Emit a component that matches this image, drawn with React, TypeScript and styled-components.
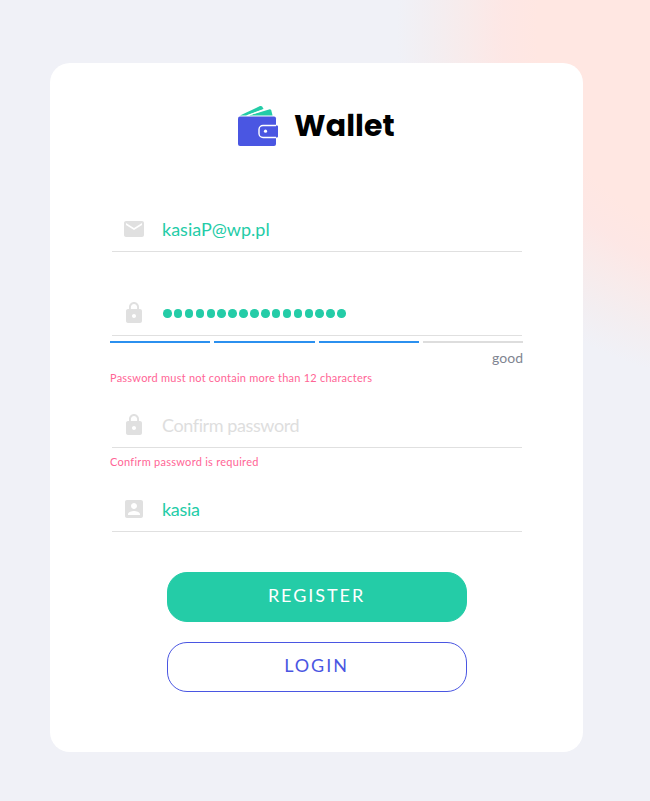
import React from 'react';
import styled, { createGlobalStyle } from 'styled-components';

const GlobalStyle = createGlobalStyle`
  * { box-sizing: border-box; }
  body { margin: 0; background: #f0f1f7; font-family: Lato, "Open Sans", sans-serif; }
`;

const Page = styled.main`
  height: 801px;
  padding: 63px 0 0 50px;
  overflow: hidden;
  background: radial-gradient(circle at 752px 30px,
    #ffe7e2 0, #ffe7e2 215px, #fde7e5 250px, #f8ebeb 285px, #f3eef1 320px, #f0f1f7 355px);
`;

const Card = styled.section`
  width: 533px;
  height: 689px;
  padding: 40px 60px 0;
  border-radius: 20px;
  background: #fff;
`;

const Brand = styled.header`
  display: flex;
  align-items: center;
  height: 46px;
  padding-left: 128px;
  gap: 16px;
`;

const BrandName = styled.h1`
  margin: 0;
  padding-bottom: 2px;
  font: 700 30px/45px Poppins, Inter, sans-serif;
  letter-spacing: 0.1px;
  color: #000;
`;

const Form = styled.form`
  display: flex;
  flex-direction: column;
  padding-top: 59px;
`;

const Field = styled.div<{ $height: number }>`
  height: ${(p) => p.$height}px;
`;

const InputRow = styled.label`
  display: flex;
  align-items: center;
  height: 44px;
  margin: 0 1px 0 2px;
  padding: 0 0 2px 10px;
  gap: 16px;
  border-bottom: 1px solid #e0e0e0;
`;

const Value = styled.span<{ $muted?: boolean; $spacing: number }>`
  padding-top: 2px;
  font-size: 18px;
  line-height: 27px;
  letter-spacing: ${(p) => p.$spacing}px;
  color: ${(p) => (p.$muted ? '#dedede' : '#24cca7')};
`;

const Dots = styled.span`
  display: flex;
  gap: 2.4px;
  padding: 2px 0 0 1px;
`;

const Dot = styled.i`
  width: 8.5px;
  height: 8.5px;
  border-radius: 50%;
  background: #24cca7;
`;

const Meter = styled.div`
  display: grid;
  grid-template-columns: repeat(4, 1fr);
  gap: 4px;
  padding-top: 5px;
`;

const Segment = styled.span<{ $on: boolean }>`
  height: 2px;
  background: ${(p) => (p.$on ? '#2b90ef' : '#ddd')};
`;

const Strength = styled.p`
  margin: 5px 0 1px;
  font-size: 14px;
  line-height: 20px;
  text-align: right;
  color: #808591;
`;

const ErrorText = styled.p<{ $top: number; $spacing: number }>`
  margin: ${(p) => p.$top}px 0 0;
  font-size: 11px;
  line-height: 18px;
  letter-spacing: ${(p) => p.$spacing}px;
  color: #ff6596;
`;

const Actions = styled.div`
  display: flex;
  flex-direction: column;
  align-items: center;
  gap: 20px;
  padding-left: 1px;
`;

const Button = styled.button<{ $primary?: boolean }>`
  width: 300px;
  height: 50px;
  padding: 0 1px 4px 0;
  border: 1px solid ${(p) => (p.$primary ? '#24cca7' : '#4a56e2')};
  border-radius: 20px;
  background: ${(p) => (p.$primary ? '#24cca7' : '#fff')};
  color: ${(p) => (p.$primary ? '#fff' : '#4a56e2')};
  font: 400 18px/27px Lato, sans-serif;
  letter-spacing: 1.95px;
`;

const Icon = styled.svg`
  display: block;
  flex: none;
  width: 24px;
  height: 24px;
  fill: #e0e0e0;
`;

const WalletLogo = () => (
  <svg width="40" height="42" viewBox="0 -0.5 40 42" aria-hidden="true">
    <path d="M2 10 22 .6Q23.5 0 24.3 1.2L25.6 3.4 8 10Z" fill="#24cca7" />
    <path d="M11 10 31 3.9Q32.7 3.5 33.3 5L34.6 10Z" fill="#24cca7" />
    <path d="M10 10 27.3 3.7" stroke="#fff" strokeWidth="1" />
    <rect y="11" width="38" height="29.5" rx="2" fill="#4a56e2" />
    <path d="M39 20H25a4 4 0 0 0-4 4v4a4 4 0 0 0 4 4h14a1 1 0 0 0 1-1V21a1 1 0 0 0-1-1Z" fill="#4a56e2" />
    <path d="M38 20H25a4 4 0 0 0-4 4v4a4 4 0 0 0 4 4h13" fill="none" stroke="#fff" strokeWidth="1.4" />
    <circle cx="27.5" cy="25.7" r="1.6" fill="#fff" />
  </svg>
);

const paths = {
  mail: 'M20 4H4c-1.1 0-1.99.9-1.99 2L2 18c0 1.1.9 2 2 2h16c1.1 0 2-.9 2-2V6c0-1.1-.9-2-2-2zm0 4l-8 5-8-5V6l8 5 8-5v2z',
  lock: 'M18 8h-1V6c0-2.76-2.24-5-5-5S7 3.24 7 6v2H6c-1.1 0-2 .9-2 2v10c0 1.1.9 2 2 2h12c1.1 0 2-.9 2-2V10c0-1.1-.9-2-2-2zm-6 9c-1.1 0-2-.9-2-2s.9-2 2-2 2 .9 2 2-.9 2-2 2zm3.1-9H8.9V6c0-1.71 1.39-3.1 3.1-3.1 1.71 0 3.1 1.39 3.1 3.1v2z',
  account: 'M3 5v14c0 1.1.89 2 2 2h14c1.1 0 2-.9 2-2V5c0-1.1-.9-2-2-2H5c-1.11 0-2 .9-2 2zm12 4c0 1.66-1.34 3-3 3s-3-1.34-3-3 1.34-3 3-3 3 1.34 3 3zm-9 8c0-2 4-3.1 6-3.1s6 1.1 6 3.1v1H6v-1z',
};

const FieldIcon = ({ name }: { name: keyof typeof paths }) => (
  <Icon viewBox="0 0 24 24" aria-hidden="true"><path d={paths[name]} /></Icon>
);

export default function App() {
  return (
    <>
      <GlobalStyle />
      <Page>
        <Card>
          <Brand><WalletLogo /><BrandName>Wallet</BrandName></Brand>
          <Form>
            <Field $height={84}>
              <InputRow><FieldIcon name="mail" /><Value $spacing={0}>kasiaP@wp.pl</Value></InputRow>
            </Field>
            <Field $height={112}>
              <InputRow>
                <FieldIcon name="lock" />
                <Dots>{Array.from({ length: 17 }, (_, i) => <Dot key={i} />)}</Dots>
              </InputRow>
              <Meter>{[true, true, true, false].map((on, i) => <Segment key={i} $on={on} />)}</Meter>
              <Strength>good</Strength>
              <ErrorText $top={0} $spacing={0.23}>Password must not contain more than 12 characters</ErrorText>
            </Field>
            <Field $height={84}>
              <InputRow><FieldIcon name="lock" /><Value $muted $spacing={-0.4}>Confirm password</Value></InputRow>
              <ErrorText $top={5} $spacing={0.27}>Confirm password is required</ErrorText>
            </Field>
            <Field $height={84}>
              <InputRow><FieldIcon name="account" /><Value $spacing={-0.3}>kasia</Value></InputRow>
            </Field>
            <Actions>
              <Button type="button" $primary>REGISTER</Button>
              <Button type="button">LOGIN</Button>
            </Actions>
          </Form>
        </Card>
      </Page>
    </>
  );
}
